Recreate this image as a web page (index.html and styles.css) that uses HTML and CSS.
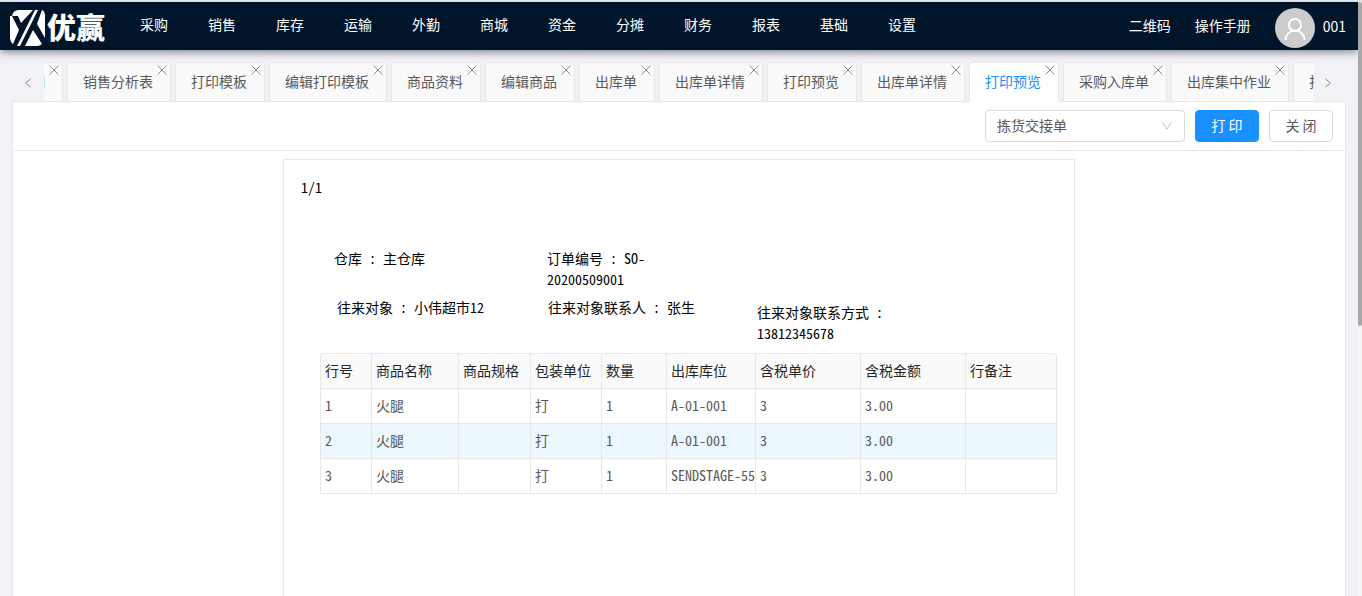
FILE: index.html
```html
<!DOCTYPE html>
<html lang="zh-CN">
<head>
<meta charset="utf-8">
<title>优赢</title>
<link rel="stylesheet" href="styles.css">
</head>
<body>
<svg class="sprite" aria-hidden="true">
  <symbol id="close" viewBox="0 0 10 10"><path d="M.5.5l9 9M9.500.5l-9 9"/></symbol>
</svg>
<div class="app">
  <header class="header">
    <a class="logo" href="#">
      <svg class="mark" viewBox="0 0 36 36" aria-hidden="true">
        <g fill="#fff">
          <path d="M3 3Q5 0 9 0H23L11 13L8 6H2Z"/>
          <path d="M0 6H2L9 20L3 34Q0 32 0 27Z"/>
          <path d="M25 0H28L10 36H7Z"/>
          <path d="M32 0Q35 1 35 6V28L27 14Z"/>
          <path d="M23 20L32 34Q30 36 27 36H15Z"/>
        </g>
      </svg>
      <span class="brand">优赢</span>
    </a>
    <nav class="nav">
      <a href="#">采购</a><a href="#">销售</a><a href="#">库存</a><a href="#">运输</a><a href="#">外勤</a><a href="#">商城</a><a href="#">资金</a><a href="#">分摊</a><a href="#">财务</a><a href="#">报表</a><a href="#">基础</a><a href="#">设置</a>
    </nav>
    <div class="user">
      <a href="#">二维码</a>
      <a href="#">操作手册</a>
      <a class="account" href="#">
        <span class="avatar"><svg viewBox="0 0 24 24" aria-hidden="true"><circle cx="12" cy="8" r="6"/><path d="M2.500 23a9.500 9.500 0 0 1 19 0"/></svg></span>
        <span>001</span>
      </a>
    </div>
  </header>

  <div class="tabs">
    <button class="arrow" aria-label="向左"><svg viewBox="0 0 8 10"><path d="M6.500 1L1.500 5l5 4"/></svg></button>
    <div class="viewport">
      <div class="tablist">
        <div class="tab"><button class="name">订单明细</button><button class="x" aria-label="关闭标签"><svg><use href="#close"/></svg></button></div>
        <div class="tab"><button class="name">销售分析表</button><button class="x" aria-label="关闭标签"><svg><use href="#close"/></svg></button></div>
        <div class="tab"><button class="name">打印模板</button><button class="x" aria-label="关闭标签"><svg><use href="#close"/></svg></button></div>
        <div class="tab"><button class="name">编辑打印模板</button><button class="x" aria-label="关闭标签"><svg><use href="#close"/></svg></button></div>
        <div class="tab"><button class="name">商品资料</button><button class="x" aria-label="关闭标签"><svg><use href="#close"/></svg></button></div>
        <div class="tab"><button class="name">编辑商品</button><button class="x" aria-label="关闭标签"><svg><use href="#close"/></svg></button></div>
        <div class="tab"><button class="name">出库单</button><button class="x" aria-label="关闭标签"><svg><use href="#close"/></svg></button></div>
        <div class="tab"><button class="name">出库单详情</button><button class="x" aria-label="关闭标签"><svg><use href="#close"/></svg></button></div>
        <div class="tab"><button class="name">打印预览</button><button class="x" aria-label="关闭标签"><svg><use href="#close"/></svg></button></div>
        <div class="tab"><button class="name">出库单详情</button><button class="x" aria-label="关闭标签"><svg><use href="#close"/></svg></button></div>
        <div class="tab active"><button class="name">打印预览</button><button class="x" aria-label="关闭标签"><svg><use href="#close"/></svg></button></div>
        <div class="tab"><button class="name">采购入库单</button><button class="x" aria-label="关闭标签"><svg><use href="#close"/></svg></button></div>
        <div class="tab"><button class="name">出库集中作业</button><button class="x" aria-label="关闭标签"><svg><use href="#close"/></svg></button></div>
        <div class="tab"><button class="name">打印预览</button><button class="x" aria-label="关闭标签"><svg><use href="#close"/></svg></button></div>
      </div>
    </div>
    <button class="arrow" aria-label="向右"><svg viewBox="0 0 8 10"><path d="M1.500 1l5 4-5 4"/></svg></button>
  </div>

  <main class="content">
    <div class="toolbar">
      <div class="picker">
        <select aria-label="打印模板"><option>拣货交接单</option></select>
        <svg viewBox="0 0 10 8" aria-hidden="true"><path d="M.5.5L5 7 9.500.5"/></svg>
      </div>
      <button class="btn primary">打 印</button>
      <button class="btn">关 闭</button>
    </div>
    <article class="sheet">
      <div class="pageno">1/1</div>
      <div class="fields first">
        <p>仓库 : 主仓库</p>
        <p class="order">订单编号 : SO-<br>20200509001</p>
      </div>
      <div class="fields second">
        <p>往来对象 : 小伟超市12</p>
        <p>往来对象联系人 : 张生</p>
        <p class="phone">往来对象联系方式 : 13812345678</p>
      </div>
      <table class="goods">
        <colgroup><col class="c-no"><col class="c-name"><col class="c-spec"><col class="c-unit"><col class="c-qty"><col class="c-loc"><col class="c-money"><col class="c-money"><col></colgroup>
        <thead><tr><th>行号</th><th>商品名称</th><th>商品规格</th><th>包装单位</th><th>数量</th><th>出库库位</th><th>含税单价</th><th>含税金额</th><th>行备注</th></tr></thead>
        <tbody>
          <tr><td>1</td><td>火腿</td><td></td><td>打</td><td>1</td><td>A-01-001</td><td>3</td><td>3.00</td><td></td></tr>
          <tr class="hover"><td>2</td><td>火腿</td><td></td><td>打</td><td>1</td><td>A-01-001</td><td>3</td><td>3.00</td><td></td></tr>
          <tr><td>3</td><td>火腿</td><td></td><td>打</td><td>1</td><td>SENDSTAGE-55</td><td>3</td><td>3.00</td><td></td></tr>
        </tbody>
      </table>
    </article>
  </main>
</div>
<div class="scrollbar" aria-hidden="true"><div class="thumb"></div></div>
</body>
</html>
```
FILE: styles.css
```css
* { box-sizing: border-box; }
body {
  margin: 0;
  height: 100vh;
  display: flex;
  overflow: hidden;
  border-top: 2px solid #dde4ea;
  background: #f0f2f5;
  color: #595959;
  font: 14px/21px "Noto Sans CJK SC", sans-serif;
}
a { color: inherit; text-decoration: none; }
button, select { font: inherit; color: inherit; margin: 0; padding: 0; border: 0; background: none; }
svg { display: block; fill: none; stroke: currentColor; }
.sprite { position: absolute; width: 0; height: 0; }
.app { flex: 1; min-width: 0; display: flex; flex-direction: column; }

.header {
  flex: none;
  display: flex;
  align-items: center;
  height: 48px;
  padding: 0 12px 0 10px;
  background: #001529;
  color: #fff;
  box-shadow: 0 2px 8px rgba(0, 21, 41, .5);
}
.logo { display: flex; align-items: center; gap: 1px; width: 110px; padding-top: 4px; }
.mark { width: 36px; height: 36px; stroke: none; }
.brand { font-size: 29px; line-height: 32px; padding-bottom: 4px; font-weight: 900; }
.nav { display: flex; padding-bottom: 4px; }
.nav a { padding: 0 20px; }
.user { display: flex; align-items: center; gap: 24px; margin-left: auto; }
.user > a { padding-bottom: 2px; }
.user > .account { display: flex; align-items: center; gap: 8px; padding: 4px 0 0; }
.account span:last-child { padding-bottom: 4px; }
.avatar { display: grid; place-items: center; width: 40px; height: 40px; border-radius: 50%; background: #ccc; }
.avatar svg { width: 24px; height: 24px; margin-top: 2px; stroke-width: 2; }

.tabs { display: flex; flex: none; margin: 12px 12px 0; position: relative; z-index: 1; }
.arrow { flex: none; display: grid; place-items: center; width: 32px; height: 40px; color: #8c8c8c; padding-top: 2px; }
.arrow:last-child { padding-right: 4px; }
.arrow svg { width: 8px; height: 10px; }
.viewport { flex: 1; min-width: 0; overflow: hidden; }
.tablist { display: flex; gap: 4px; margin-left: -71px; }
.tab {
  position: relative;
  flex: none;
  height: 40px;
  padding: 0 17px 0 15px;
  border: 1px solid #e8e8e8;
  border-radius: 4px 4px 0 0;
  background: #fafafa;
}
.name { height: 36px; }
.tab.active { background: #fff; border-bottom-color: #fff; color: #1890ff; }
.x { position: absolute; top: 2px; right: 3px; width: 10px; height: 10px; color: #8c8c8c; }
.x svg { width: 10px; height: 10px; }

.content { flex: 1; margin: -1px 12px 0; border: 1px solid #e8e8e8; border-bottom: 0; background: #fff; min-height: 0; overflow: hidden; }
.toolbar { display: flex; justify-content: flex-end; gap: 10px; padding: 8px 12px; border-bottom: 1px solid #e8e8e8; }
.picker { position: relative; width: 200px; }
.picker select { appearance: none; width: 100%; height: 32px; padding: 0 11px 2px; border: 1px solid #d9d9d9; border-radius: 4px; background: #fff; }
.picker svg { position: absolute; right: 13px; top: 12px; width: 10px; height: 8px; color: #bfbfbf; }
.btn { width: 64px; height: 32px; padding-bottom: 2px; border: 1px solid #d9d9d9; border-radius: 4px; background: #fff; }
.btn.primary { border-color: #1890ff; background: #1890ff; color: #fff; }

.sheet {
  width: 792px;
  min-height: 1120px;
  margin: 8px auto;
  padding: 17px 17px 0;
  border: 1px solid #e8e8e8;
  color: #000;
  font-family: "Noto Sans Mono CJK SC", "Noto Sans CJK SC", monospace;
}
.fields { display: grid; }
.fields p { margin: 0; }
.first { grid-template-columns: 213px 210px 1fr; padding: 50px 0 7px 33px; }
.second { grid-template-columns: 211px 209px 1fr; height: 47px; padding-left: 36px; }
.phone { width: 140px; align-self: end; }

.goods {
  width: 737px;
  margin: 9px 0 0 19px;
  table-layout: fixed;
  border-collapse: separate;
  border-spacing: 0;
  border: solid #e8e8e8;
  border-width: 1px 0 0 1px;
  border-radius: 4px 4px 0 0;
}
.goods th, .goods td {
  height: 35px;
  padding: 0 0 2px 4px;
  border: solid #e8e8e8;
  border-width: 0 1px 1px 0;
  text-align: left;
  font-weight: 400;
  white-space: nowrap;
  overflow: hidden;
}
.goods th { background: #fafafa; color: #262626; }
.goods th:first-child { border-top-left-radius: 4px; }
.goods th:last-child { border-top-right-radius: 4px; }
.goods td { color: #595959; }
.goods .hover td { background: #ecf8fe; }
.c-no { width: 51px; }
.c-name { width: 87px; }
.c-spec { width: 72px; }
.c-unit { width: 71px; }
.c-qty { width: 65px; }
.c-loc { width: 89px; }
.c-money { width: 105px; }

.scrollbar { flex: none; width: 4px; background: #f5f5f5; }
.thumb { height: 54.500%; border-radius: 2px; background: #a8a8a8; }
```
